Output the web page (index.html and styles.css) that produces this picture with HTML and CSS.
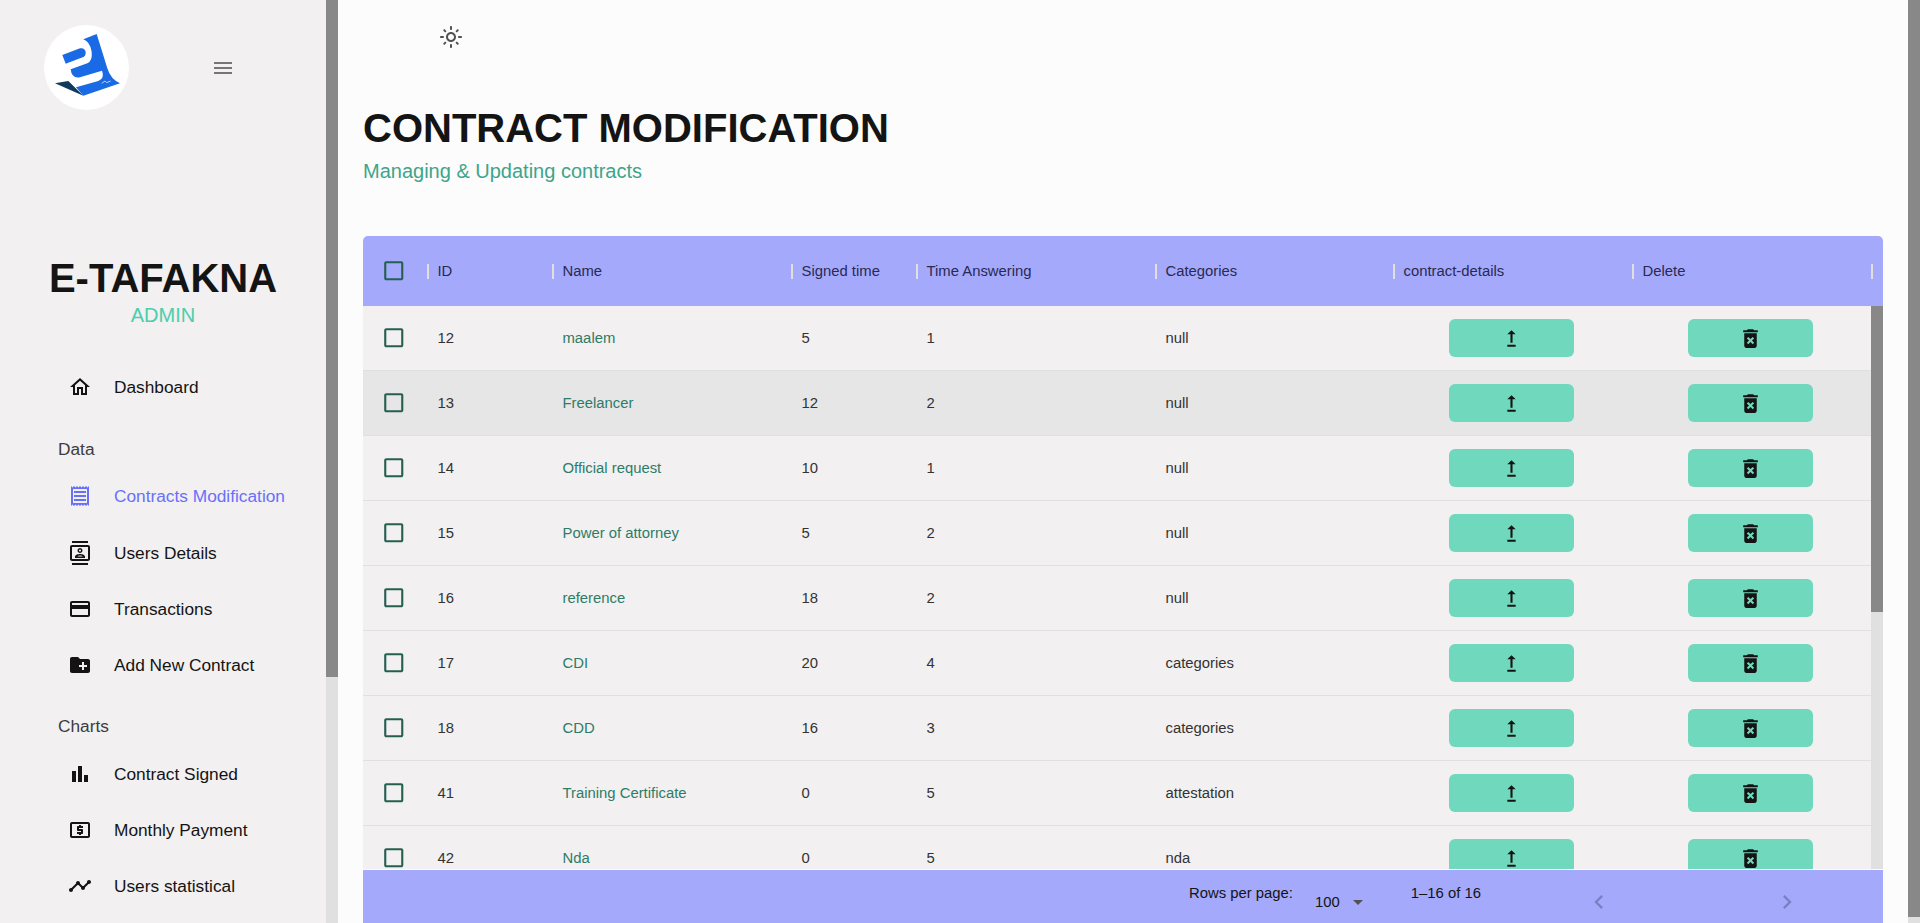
FILE: index.html
```html
<!DOCTYPE html>
<html lang="en">
<head>
<meta charset="utf-8">
<title>E-TAFAKNA Admin</title>
<link rel="stylesheet" href="styles.css">
</head>
<body>
<svg class="defs" aria-hidden="true">
  <symbol id="i-box" viewBox="0 0 24 24"><path d="M19 5v14H5V5h14m0-2H5c-1.1 0-2 .9-2 2v14c0 1.1.9 2 2 2h14c1.1 0 2-.9 2-2V5c0-1.1-.9-2-2-2z"/></symbol>
  <symbol id="i-up" viewBox="0 0 24 24"><path d="M16 18v2H8v-2h8zM11 7.99V16h2V7.99h3L12 4 8 7.99h3z"/></symbol>
  <symbol id="i-del" viewBox="0 0 24 24"><path d="M6 19c0 1.1.9 2 2 2h8c1.1 0 2-.9 2-2V7H6v12zm2.46-7.12l1.41-1.41L12 12.59l2.12-2.12 1.41 1.41L13.41 14l2.12 2.12-1.41 1.41L12 15.41l-2.12 2.12-1.41-1.41L10.59 14l-2.13-2.12zM15.5 4l-1-1h-5l-1 1H5v2h14V4z"/></symbol>
</svg>
<div class="app">
  <aside class="sidebar">
    <div class="side-content">
    <div class="side-top">
      <svg class="logo" viewBox="132 75 255 255">
        <circle cx="259.5" cy="202.5" r="127.5" fill="#fff"/>
        <path fill="#0f3a5c" d="M165 250L205 243L250 287Z"/>
        <path fill="#1a6ae6" d="M250 118L290 102L322 205Q332 238 360 250L250 287L228 262L295 243Q315 235 306 212L240 232Q215 237 212 208L262 190Q278 182 275 155Q270 125 250 118Z"/>
        <path fill="#1a6ae6" d="M187 165L240 145Q254 142 257 156Q258 168 248 172L197 191Z"/>
        <path fill="none" stroke="#fff" stroke-width="2" d="M305 250L315 243L320 248L332 243"/>
      </svg>
      <svg class="ico menu" viewBox="0 0 24 24"><path d="M3 18h18v-2H3v2zm0-5h18v-2H3v2zm0-7v2h18V6H3z"/></svg>
    </div>
    <h2 class="brand">E-TAFAKNA</h2>
    <p class="role">ADMIN</p>
    <nav class="nav">
      <a class="item"><svg class="ico" viewBox="0 0 24 24"><path d="M12 5.69l5 4.5V18h-2v-6H9v6H7v-7.81l5-4.5M12 3L2 12h3v8h6v-6h2v6h6v-8h3L12 3z"/></svg><span>Dashboard</span></a>
      <p class="group">Data</p>
      <a class="item active"><svg class="ico" viewBox="0 0 24 24"><path d="M19.5 3.5 18 2l-1.5 1.5L15 2l-1.5 1.5L12 2l-1.5 1.5L9 2 7.5 3.5 6 2 4.5 3.5 3 2v20l1.5-1.5L6 22l1.5-1.5L9 22l1.5-1.5L12 22l1.5-1.5L15 22l1.5-1.5L18 22l1.5-1.5L21 22V2l-1.5 1.5zM19 19.09H5V4.91h14v14.18zM6 15h12v2H6zm0-4h12v2H6zm0-4h12v2H6z"/></svg><span>Contracts Modification</span></a>
      <a class="item"><svg class="ico" viewBox="0 0 24 24"><path d="M20 0H4v2h16V0zM4 24h16v-2H4v2zM20 4H4c-1.1 0-2 .9-2 2v12c0 1.1.9 2 2 2h16c1.1 0 2-.9 2-2V6c0-1.1-.9-2-2-2zm0 14H4V6h16v12zm-8-6c1.38 0 2.5-1.12 2.5-2.5S13.38 7 12 7 9.5 8.12 9.5 9.5 10.62 12 12 12zm0-3.5c.55 0 1 .45 1 1s-.45 1-1 1-1-.45-1-1 .45-1 1-1zM17 17v-1.5c0-1.67-3.33-2.5-5-2.5s-5 .83-5 2.5V17h10zm-5-2.5c1 0 2.1.3 2.8 1H9.2c.7-.7 1.8-1 2.8-1z"/></svg><span>Users Details</span></a>
      <a class="item"><svg class="ico" viewBox="0 0 24 24"><path d="M20 4H4c-1.11 0-1.99.89-1.99 2L2 18c0 1.11.89 2 2 2h16c1.11 0 2-.89 2-2V6c0-1.11-.89-2-2-2zm0 14H4v-6h16v6zm0-10H4V6h16v2z"/></svg><span>Transactions</span></a>
      <a class="item"><svg class="ico" viewBox="0 0 24 24"><path d="M20 6h-8l-2-2H4c-1.11 0-1.99.89-1.99 2L2 18c0 1.11.89 2 2 2h16c1.11 0 2-.89 2-2V8c0-1.11-.89-2-2-2zm-1 8h-3v3h-2v-3h-3v-2h3V9h2v3h3v2z"/></svg><span>Add New Contract</span></a>
      <p class="group group-next">Charts</p>
      <a class="item"><svg class="ico" viewBox="0 0 24 24"><path d="M4 9h4v11H4zm12 4h4v7h-4zm-6-9h4v16h-4z"/></svg><span>Contract Signed</span></a>
      <a class="item"><svg class="ico" viewBox="0 0 24 24"><path d="M11 17h2v-1h1c.55 0 1-.45 1-1v-3c0-.55-.45-1-1-1h-3v-1h4V8h-2V7h-2v1h-1c-.55 0-1 .45-1 1v3c0 .55.45 1 1 1h3v1H9v2h2v1zm9-13H4c-1.11 0-1.99.89-1.99 2L2 18c0 1.11.89 2 2 2h16c1.11 0 2-.89 2-2V6c0-1.11-.89-2-2-2zm0 14H4V6h16v12z"/></svg><span>Monthly Payment</span></a>
      <a class="item"><svg class="ico" viewBox="0 0 24 24"><path d="M23 8c0 1.1-.9 2-2 2-.18 0-.35-.02-.51-.07l-3.56 3.55c.05.16.07.34.07.52 0 1.1-.9 2-2 2s-2-.9-2-2c0-.18.02-.36.07-.52l-2.55-2.55c-.16.05-.34.07-.52.07s-.36-.02-.52-.07l-4.55 4.56c.05.16.07.33.07.51 0 1.1-.9 2-2 2s-2-.9-2-2 .9-2 2-2c.18 0 .35.02.51.07l4.56-4.55C8.02 9.36 8 9.18 8 9c0-1.1.9-2 2-2s2 .9 2 2c0 .18-.02.36-.07.52l2.55 2.55c.16-.05.34-.07.52-.07s.36.02.52.07l3.55-3.56C19.02 8.35 19 8.18 19 8c0-1.1.9-2 2-2s2 .9 2 2z"/></svg><span>Users statistical</span></a>
    </nav>
    </div>
    <div class="vbar"><div class="thumb thumb-side"></div></div>
  </aside>
  <main class="main">
    <div class="main-content">
    <div class="topbar">
      <svg class="ico sun" viewBox="0 0 24 24"><path d="M12 9c1.65 0 3 1.35 3 3s-1.35 3-3 3-3-1.35-3-3 1.35-3 3-3m0-2c-2.76 0-5 2.24-5 5s2.24 5 5 5 5-2.24 5-5-2.24-5-5-5zM2 13h2c.55 0 1-.45 1-1s-.45-1-1-1H2c-.55 0-1 .45-1 1s.45 1 1 1zm18 0h2c.55 0 1-.45 1-1s-.45-1-1-1h-2c-.55 0-1 .45-1 1s.45 1 1 1zM11 2v2c0 .55.45 1 1 1s1-.45 1-1V2c0-.55-.45-1-1-1s-1 .45-1 1zm0 18v2c0 .55.45 1 1 1s1-.45 1-1v-2c0-.55-.45-1-1-1s-1 .45-1 1zM5.99 4.58c-.39-.39-1.03-.39-1.41 0-.39.39-.39 1.03 0 1.41l1.06 1.06c.39.39 1.03.39 1.41 0s.39-1.03 0-1.41L5.99 4.58zm12.37 12.37c-.39-.39-1.03-.39-1.41 0-.39.39-.39 1.03 0 1.41l1.06 1.06c.39.39 1.03.39 1.41 0 .39-.39.39-1.03 0-1.41l-1.06-1.06zm1.06-10.96c.39-.39.39-1.03 0-1.41-.39-.39-1.03-.39-1.41 0l-1.06 1.06c-.39.39-.39 1.03 0 1.41s1.03.39 1.41 0l1.06-1.06zM7.05 18.36c.39-.39.39-1.03 0-1.41-.39-.39-1.03-.39-1.41 0l-1.06 1.06c-.39.39-.39 1.03 0 1.41s1.03.39 1.41 0l1.06-1.06z"/></svg>
    </div>
    <header class="head">
      <h1 class="title">CONTRACT MODIFICATION</h1>
      <p class="subtitle">Managing &amp; Updating contracts</p>
    </header>
    <section class="grid">
      <div class="row-grid grid-head">
        <div class="cell"><svg class="box"><use href="#i-box"/></svg></div>
        <div class="hcell">ID</div>
        <div class="hcell">Name</div>
        <div class="hcell">Signed time</div>
        <div class="hcell">Time Answering</div>
        <div class="hcell">Categories</div>
        <div class="hcell">contract-details</div>
        <div class="hcell">Delete</div>
        <div class="hcell"></div>
      </div>
      <div class="grid-body">
        <div class="rows">
          <div class="row-grid row"><div class="cell"><svg class="box"><use href="#i-box"/></svg></div><div class="cell">12</div><div class="cell name">maalem</div><div class="cell">5</div><div class="cell">1</div><div class="cell">null</div><div class="cell act"><a class="btn"><svg class="bi"><use href="#i-up"/></svg></a></div><div class="cell act"><a class="btn"><svg class="bi"><use href="#i-del"/></svg></a></div></div>
          <div class="row-grid row hover"><div class="cell"><svg class="box"><use href="#i-box"/></svg></div><div class="cell">13</div><div class="cell name">Freelancer</div><div class="cell">12</div><div class="cell">2</div><div class="cell">null</div><div class="cell act"><a class="btn"><svg class="bi"><use href="#i-up"/></svg></a></div><div class="cell act"><a class="btn"><svg class="bi"><use href="#i-del"/></svg></a></div></div>
          <div class="row-grid row"><div class="cell"><svg class="box"><use href="#i-box"/></svg></div><div class="cell">14</div><div class="cell name">Official request</div><div class="cell">10</div><div class="cell">1</div><div class="cell">null</div><div class="cell act"><a class="btn"><svg class="bi"><use href="#i-up"/></svg></a></div><div class="cell act"><a class="btn"><svg class="bi"><use href="#i-del"/></svg></a></div></div>
          <div class="row-grid row"><div class="cell"><svg class="box"><use href="#i-box"/></svg></div><div class="cell">15</div><div class="cell name">Power of attorney</div><div class="cell">5</div><div class="cell">2</div><div class="cell">null</div><div class="cell act"><a class="btn"><svg class="bi"><use href="#i-up"/></svg></a></div><div class="cell act"><a class="btn"><svg class="bi"><use href="#i-del"/></svg></a></div></div>
          <div class="row-grid row"><div class="cell"><svg class="box"><use href="#i-box"/></svg></div><div class="cell">16</div><div class="cell name">reference</div><div class="cell">18</div><div class="cell">2</div><div class="cell">null</div><div class="cell act"><a class="btn"><svg class="bi"><use href="#i-up"/></svg></a></div><div class="cell act"><a class="btn"><svg class="bi"><use href="#i-del"/></svg></a></div></div>
          <div class="row-grid row"><div class="cell"><svg class="box"><use href="#i-box"/></svg></div><div class="cell">17</div><div class="cell name">CDI</div><div class="cell">20</div><div class="cell">4</div><div class="cell">categories</div><div class="cell act"><a class="btn"><svg class="bi"><use href="#i-up"/></svg></a></div><div class="cell act"><a class="btn"><svg class="bi"><use href="#i-del"/></svg></a></div></div>
          <div class="row-grid row"><div class="cell"><svg class="box"><use href="#i-box"/></svg></div><div class="cell">18</div><div class="cell name">CDD</div><div class="cell">16</div><div class="cell">3</div><div class="cell">categories</div><div class="cell act"><a class="btn"><svg class="bi"><use href="#i-up"/></svg></a></div><div class="cell act"><a class="btn"><svg class="bi"><use href="#i-del"/></svg></a></div></div>
          <div class="row-grid row"><div class="cell"><svg class="box"><use href="#i-box"/></svg></div><div class="cell">41</div><div class="cell name">Training Certificate</div><div class="cell">0</div><div class="cell">5</div><div class="cell">attestation</div><div class="cell act"><a class="btn"><svg class="bi"><use href="#i-up"/></svg></a></div><div class="cell act"><a class="btn"><svg class="bi"><use href="#i-del"/></svg></a></div></div>
          <div class="row-grid row"><div class="cell"><svg class="box"><use href="#i-box"/></svg></div><div class="cell">42</div><div class="cell name">Nda</div><div class="cell">0</div><div class="cell">5</div><div class="cell">nda</div><div class="cell act"><a class="btn"><svg class="bi"><use href="#i-up"/></svg></a></div><div class="cell act"><a class="btn"><svg class="bi"><use href="#i-del"/></svg></a></div></div>
        </div>
        <div class="vbar"><div class="thumb thumb-grid"></div></div>
      </div>
      <footer class="grid-foot">
        <span class="rpp">Rows per page:</span>
        <span class="sel">100<svg class="drop" viewBox="0 0 24 24"><path d="M7 10l5 5 5-5z"/></svg></span>
        <span class="count">1–16 of 16</span>
        <svg class="chev prev" viewBox="0 0 24 24"><path d="M15.41 7.41 14 6l-6 6 6 6 1.41-1.41L10.83 12z"/></svg>
        <svg class="chev next" viewBox="0 0 24 24"><path d="M10 6 8.59 7.41 13.17 12l-4.58 4.59L10 18l6-6z"/></svg>
      </footer>
    </section>
    </div>
    <div class="vbar"><div class="thumb thumb-main"></div></div>
  </main>
</div>
</body>
</html>
```
FILE: styles.css
```css
* { box-sizing: border-box; }
html, body { margin: 0; height: 923px; overflow: hidden; }
body { font-family: "Liberation Sans", Arial, sans-serif; color: #141414; background: #fcfcfc; }
.defs { display: none; }
.app { display: flex; height: 923px; }
h1, h2, p { margin: 0; font-weight: inherit; }

.vbar { flex: 0 0 12px; width: 12px; background: #e0e0e0; }
.thumb { background: #888; width: 12px; }
.thumb-side { height: 677px; }
.thumb-grid { height: 306px; }
.thumb-main { height: 917px; }

.sidebar { flex: 0 0 338px; height: 923px; display: flex; overflow: hidden; background: #f2f0f0; }
.side-content { flex: 1; min-width: 0; }
.side-top { display: flex; align-items: center; padding: 25px 0 0 44px; }
.logo { width: 85px; height: 85px; display: block; }
.ico { width: 24px; height: 24px; flex: none; fill: #141414; display: block; }
.menu { fill: #757575; margin-left: 82px; }
.brand { font-size: 40px; font-weight: 700; line-height: 46px; text-align: center; margin-top: 145px; }
.role { font-size: 20px; line-height: 24px; color: #4cceac; text-align: center; margin-top: 2px; }
.nav { display: flex; flex-direction: column; margin-top: 32px; }
.item { display: flex; align-items: center; gap: 22px; height: 56px; padding-left: 68px; font-size: 17.3px; color: #141414; }
.item.active { color: #6870fa; margin-bottom: 1px; }
.item.active .ico { fill: #6870fa; }
.group { font-size: 17.3px; line-height: 20px; color: #3d3d3d; padding: 24px 0 9px 58px; }
.group-next { padding: 23px 0 10px 58px; }

.main { flex: 1; min-width: 0; height: 923px; display: flex; overflow: hidden; background: #fcfcfc; }
.main-content { flex: 1; min-width: 0; padding: 0 25px; }
.topbar { height: 74px; display: flex; align-items: center; padding-left: 76px; }
.sun { fill: #525252; }
.head { height: 162px; padding-top: 32px; }
.title { font-size: 40px; font-weight: 700; line-height: 46px; margin-top: -1px; }
.subtitle { font-size: 20px; line-height: 24px; color: #3da58a; margin-top: 8px; }

.grid { height: 688px; display: flex; flex-direction: column; background: #f2f0f0; font-size: 14.85px; border-radius: 5px 5px 0 0; overflow: hidden; }
.row-grid { display: grid; grid-template-columns: 64.5px 125px 239px 125px 239px 238px 239px 238.5px; }
.grid-head { flex: none; height: 70px; background: #a4a9fc; grid-template-columns: 64.5px 125px 239px 125px 239px 238px 239px 239.5px 11px; color: #292952; }
.hcell { display: flex; align-items: center; gap: 9px; margin-left: -1px; }
.hcell::before { content: ""; width: 2px; height: 15px; background: #e0e0e0; flex: none; }
.cell { display: flex; align-items: center; padding-left: 10px; color: #333; }
.cell:first-child { padding-left: 18px; }
.box { width: 25.5px; height: 25.5px; fill: #255f50; display: block; flex: none; }
.grid-body { flex: 1; min-height: 0; overflow: hidden; display: flex; }
.rows { flex: 1; min-width: 0; }
.row { height: 65px; border-bottom: 1px solid #e0e0e0; }
.row.hover { background: #e6e6e6; }
.name { color: #2e7c67; }
.act { justify-content: center; padding: 0 4px 0 0; }
.act + .act { padding-right: 2.5px; }
.btn { width: 125px; height: 38px; background: #70d8bd; border-radius: 6px; display: flex; align-items: center; justify-content: center; }
.bi { width: 25px; height: 25px; fill: #141414; display: block; }

.grid-foot { flex: none; height: 55px; background: #a4a9fc; border-top: 1px solid #fcfcfc; display: flex; color: #141414; }
.rpp { margin-left: 826px; padding-top: 14px; line-height: 18px; }
.sel { display: flex; margin-left: 22px; padding-top: 23px; line-height: 18px; height: 44px; }
.drop { width: 24px; height: 24px; fill: #525252; margin: -3px 0 0 6px; flex: none; }
.count { margin-left: 41px; padding-top: 14px; line-height: 18px; }
.chev { width: 28px; height: 28px; fill: #7a80c4; flex: none; margin-top: 18px; }
.prev { margin-left: 104px; }
.next { margin-left: 160px; }
```
